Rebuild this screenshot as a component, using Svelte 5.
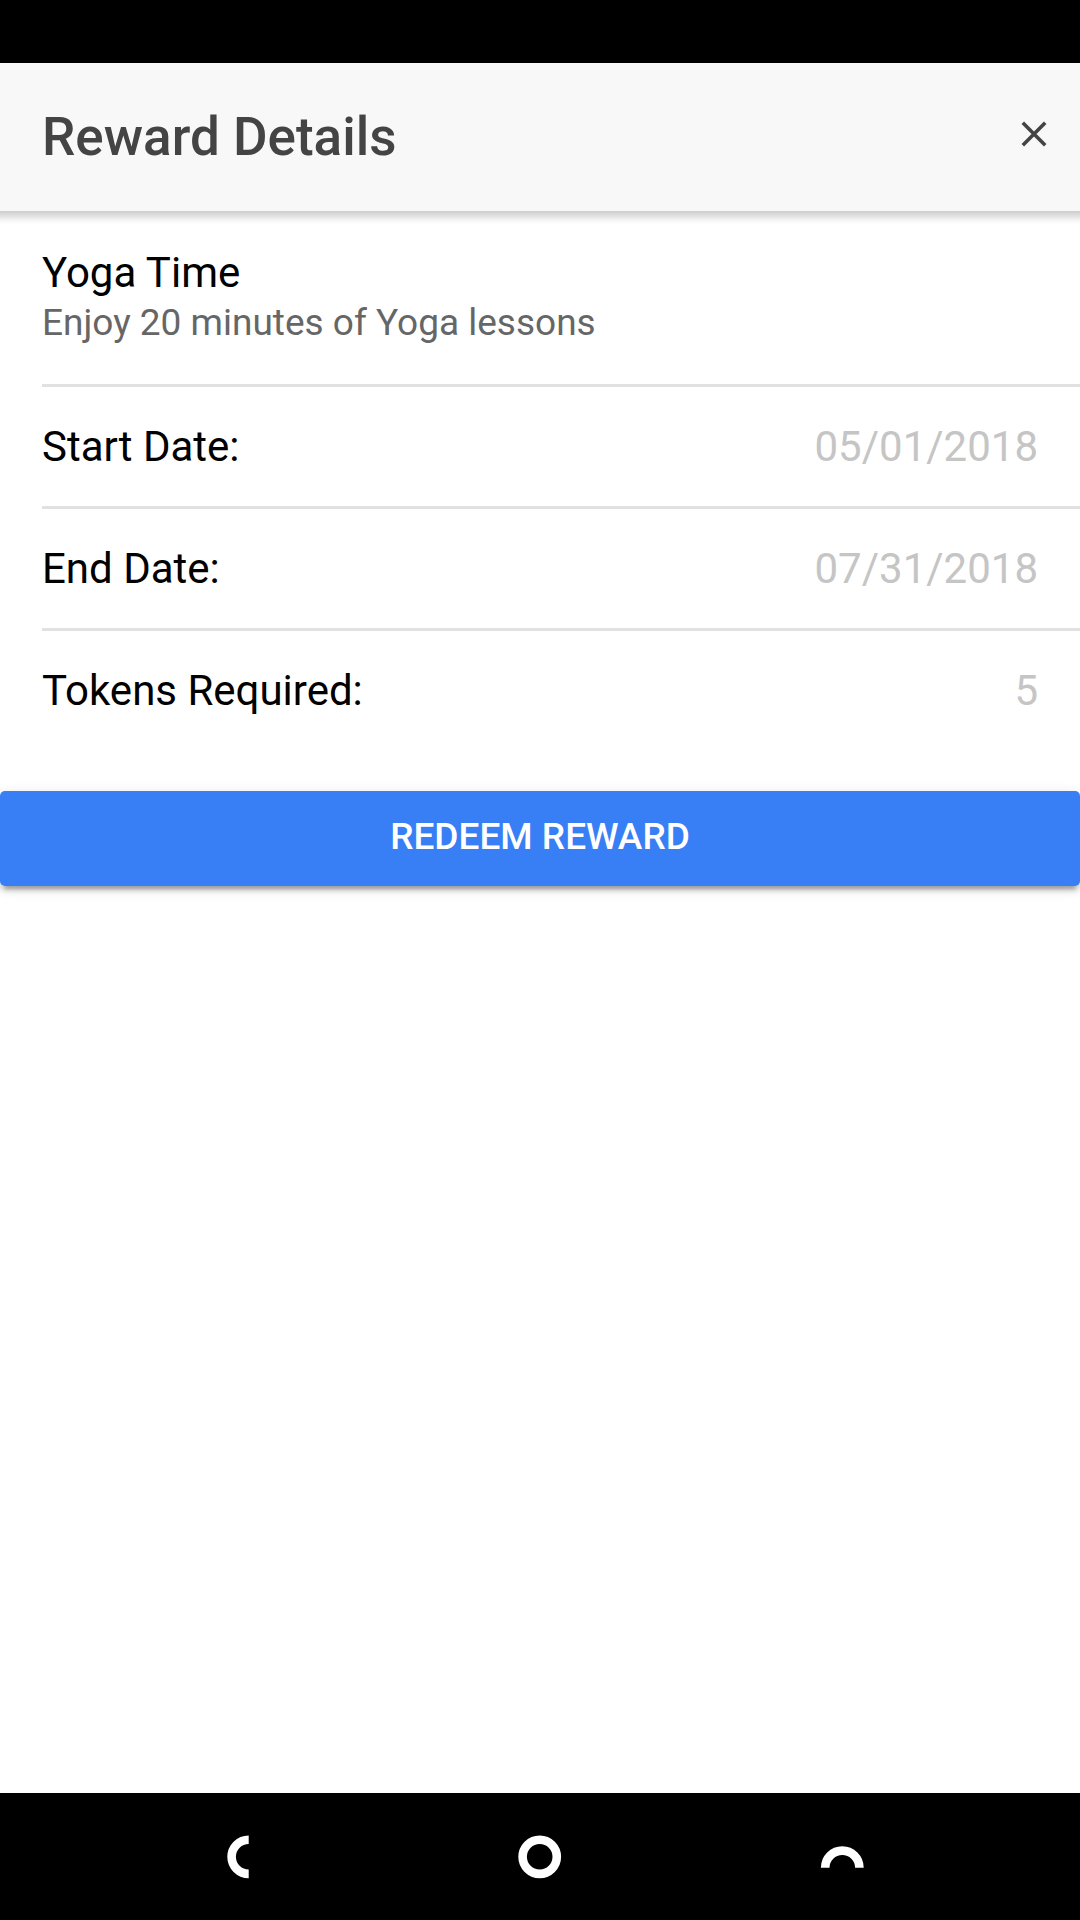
<script>
  const reward = {
    name: 'Yoga Time',
    description: 'Enjoy 20 minutes of Yoga lessons',
    details: [
      { label: 'Start Date:', value: '05/01/2018' },
      { label: 'End Date:', value: '07/31/2018' },
      { label: 'Tokens Required:', value: '5' }
    ]
  };
</script>

<div class="screen">
  <div class="status-bar"></div>

  <header class="toolbar">
    <h1>Reward Details</h1>
    <button class="close" type="button" aria-label="Close">
      <svg width="28" height="28" viewBox="0 0 28 28" aria-hidden="true">
        <path d="M2.8 2.8L25.2 25.2M25.2 2.8L2.8 25.2" fill="none" stroke="#444" stroke-width="3.6" />
      </svg>
    </button>
  </header>

  <main>
    <section class="summary">
      <h2>{reward.name}</h2>
      <p>{reward.description}</p>
    </section>
    <dl>
      {#each reward.details as item}
        <div class="row">
          <dt>{item.label}</dt>
          <dd>{item.value}</dd>
        </div>
      {/each}
    </dl>
    <button class="redeem" type="button">REDEEM REWARD</button>
  </main>

  <nav class="system-nav" aria-label="System">
    <button type="button" aria-label="Back">
      <svg width="34" height="44" viewBox="0 0 34 44" aria-hidden="true">
        <path d="M21.7 4.7A17.1 17.1 0 0 0 21.7 38.9" fill="none" stroke="#fff" stroke-width="8.6" />
      </svg>
    </button>
    <button type="button" aria-label="Home">
      <svg width="44" height="44" viewBox="0 0 44 44" aria-hidden="true">
        <circle cx="21.7" cy="21.8" r="17.1" fill="none" stroke="#fff" stroke-width="8.6" />
      </svg>
    </button>
    <button type="button" aria-label="Recent apps">
      <svg width="44" height="44" viewBox="0 0 44 44" aria-hidden="true">
        <path d="M5.2 32.7A17.1 17.1 0 0 1 39.4 32.7" fill="none" stroke="#fff" stroke-width="8.6" />
      </svg>
    </button>
  </nav>
</div>

<style>
  :global(body) {
    margin: 0;
    background: #fff;
  }

  .screen {
    display: flex;
    flex-direction: column;
    min-height: 100vh;
    font-family: Roboto, 'Liberation Sans', sans-serif;
    font-size: 42px;
    line-height: 50px;
    color: #000;
  }

  button {
    margin: 0;
    padding: 0;
    border: 0;
    background: none;
    font: inherit;
    color: inherit;
    cursor: pointer;
  }

  svg {
    display: block;
  }

  h1,
  h2,
  p,
  dl,
  dd {
    margin: 0;
    font-weight: 400;
  }

  .status-bar {
    height: 63px;
    background: #000;
  }

  .toolbar {
    position: relative;
    display: flex;
    align-items: center;
    justify-content: space-between;
    height: 148px;
    padding: 0 12px 0 42px;
    background: #f8f8f8;
    color: #444;
  }

  .toolbar::after {
    content: '';
    position: absolute;
    top: 100%;
    left: 0;
    right: 0;
    height: 13px;
    background: linear-gradient(#cdcdcd, #e0e0e0 35%, #f6f6f6 75%, #fff);
  }

  h1 {
    font-size: 53px;
    line-height: 64px;
    font-weight: 500;
  }

  .close {
    display: flex;
    align-items: center;
    justify-content: center;
    width: 68px;
    height: 84px;
    padding-bottom: 6px;
  }

  .summary {
    margin-left: 42px;
    padding: 37px 42px 36px 0;
    border-bottom: 3px solid #e1e1e1;
  }

  h2 {
    font-size: 42px;
  }

  p {
    font-size: 37px;
    color: #666;
  }

  .row {
    display: flex;
    align-items: center;
    justify-content: space-between;
    height: 119px;
    margin-left: 42px;
    padding-right: 42px;
  }

  .row:not(:last-child) {
    border-bottom: 3px solid #e1e1e1;
  }

  dd {
    color: #c5c5c5;
  }

  .redeem {
    display: block;
    width: 100%;
    height: 95px;
    margin-top: 41px;
    padding-bottom: 4px;
    border-radius: 5px;
    background: #387ef5;
    box-shadow:
      0 8px 3px -5px rgba(0, 0, 0, 0.2),
      0 5px 5px rgba(0, 0, 0, 0.14),
      0 3px 13px rgba(0, 0, 0, 0.12);
    color: #fff;
    font-size: 37px;
    font-weight: 500;
  }

  .system-nav {
    display: flex;
    align-items: center;
    justify-content: space-between;
    height: 127px;
    margin-top: auto;
    padding: 0 20% 0 21%;
    box-sizing: border-box;
    background: #000;
  }
</style>
